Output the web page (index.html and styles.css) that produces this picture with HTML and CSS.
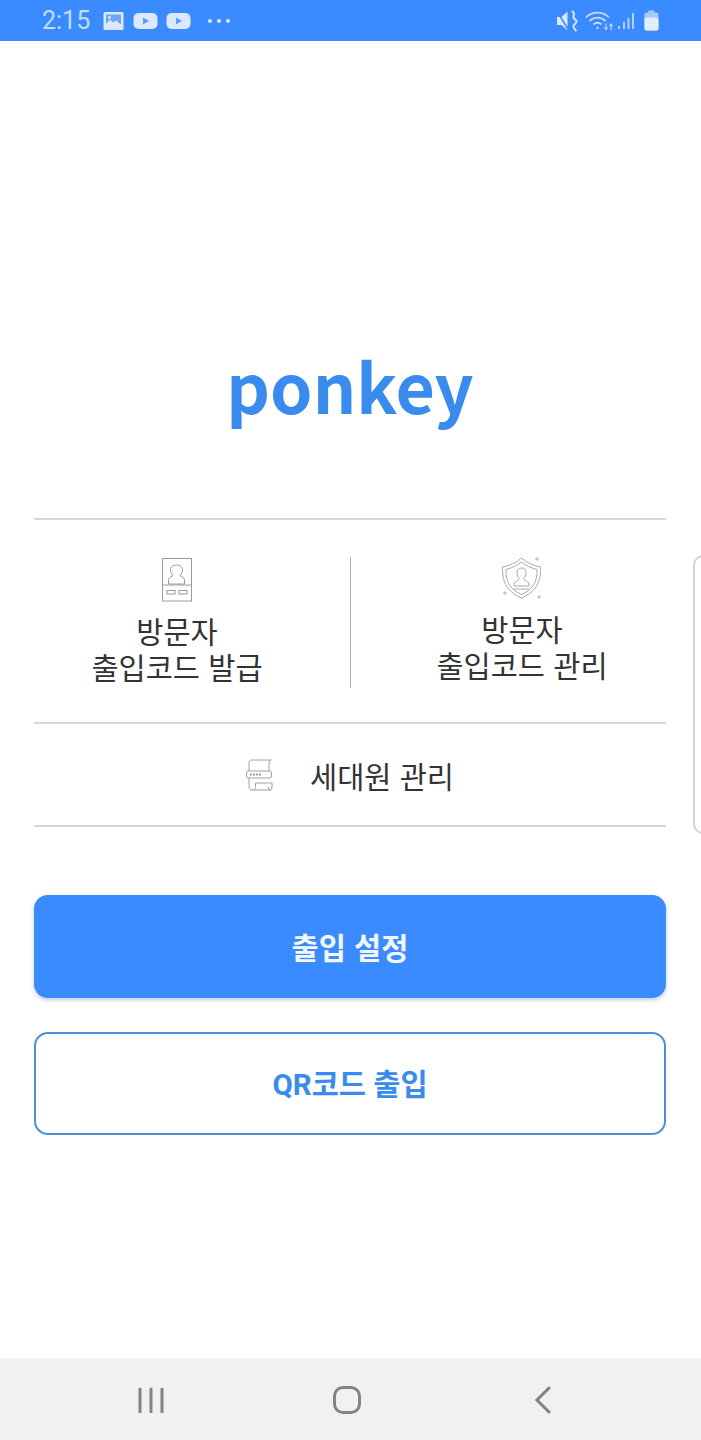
FILE: index.html
```html
<!DOCTYPE html>
<html lang="ko">
  <head>
    <meta charset="UTF-8" />
    <title>ponkey</title>
    <link rel="stylesheet" href="styles.css">
  </head>
  <body>
    <div class="status-bar">
      <div class="status-left">
        <span class="clock">2:15</span>
        <svg class="ic-photo" width="21" height="20" viewBox="0 0 21 20">
          <rect x="0.5" y="1" width="20" height="18" rx="1.5" fill="#dbe8fd"/>
          <rect x="3" y="3.5" width="15" height="11" fill="#6fa5f5"/>
          <path d="M3 13l4-4.5 3 3 3-2 5 4v1.5H3z" fill="#dbe8fd"/>
          <circle cx="6.5" cy="6.5" r="1.4" fill="#dbe8fd"/>
        </svg>
        <svg class="ic-play" width="25" height="18" viewBox="0 0 25 18">
          <rect x="0.5" y="1" width="24" height="16" rx="5" fill="#dbe8fd"/>
          <path d="M10 5.5l6 3.5-6 3.5z" fill="#5f9bf2"/>
        </svg>
        <svg class="ic-play" width="25" height="18" viewBox="0 0 25 18">
          <rect x="0.5" y="1" width="24" height="16" rx="5" fill="#dbe8fd"/>
          <path d="M10 5.5l6 3.5-6 3.5z" fill="#5f9bf2"/>
        </svg>
        <span class="dots"><i></i><i></i><i></i></span>
      </div>
      <div class="status-right">
        <svg class="ic-mute" width="23" height="24" viewBox="0 0 23 24" fill="none">
          <path d="M0 8h4.500l6-5.500v19l-6-5.500H0z" fill="#dbe8fd"/>
          <path d="M0 2l12 20" stroke="#3a8bff" stroke-width="1.5"/>
          <path d="M15 2c4 2.500 1 4.500 1.500 6.500s4 2 3 4.500-4 2.500-3 5 2 3 3 4" stroke="#dbe8fd" stroke-width="2"/>
        </svg>
        <svg class="ic-wifi" width="31" height="24" viewBox="0 0 31 24" fill="none" stroke="#c5dafb" stroke-width="1.800">
          <path d="M1 8.500c6-6.500 17-6.500 23 0"/>
          <path d="M4.500 12c4.500-4.500 11.500-4.500 16 0"/>
          <path d="M8.500 15.500c2.500-2.200 5.500-2.200 8 0"/>
          <circle cx="12.500" cy="19" r="1.200" fill="#c5dafb" stroke="none"/>
          <path d="M21 14.500v6M19.500 18.500l1.500 2 1.500-2M26 21v-6M24.500 17l1.500-2 1.500 2" stroke-width="1.100"/>
        </svg>
        <svg class="ic-signal" width="19" height="20" viewBox="0 0 19 20" fill="#b5d0fa">
          <rect x="1" y="15" width="2" height="3"/>
          <rect x="6" y="11" width="2" height="7"/>
          <rect x="10.500" y="7" width="2" height="11"/>
          <rect x="15" y="2" width="2" height="16"/>
        </svg>
        <svg class="ic-battery" width="15" height="21" viewBox="0 0 15 21">
          <rect x="4.500" y="0.500" width="6" height="3" fill="#a9c9fa"/>
          <rect x="0.500" y="2.500" width="14" height="18" rx="2" fill="#a9c9fa"/>
          <rect x="0.500" y="7.500" width="14" height="13" rx="2" fill="#e3edfd"/>
        </svg>
      </div>
    </div>

    <div class="main">
      <div class="logo">ponkey</div>

      <div class="menu-top">
        <div class="menu-cell issue">
          <svg width="32" height="46" viewBox="0 0 32 46" fill="none" stroke="#9a9a9a" stroke-width="1">
            <rect x="1.500" y="1.500" width="29" height="42.500"/>
            <path d="M1.500 28h29"/>
            <path d="M7.500 27v-4.500c0-2 3.500-3 4.500-4-2-2-2.500-3.500-2.500-6 0-2.500 2.500-4.500 6-4.500s6 2 6 4.500c0 2.500-.5 4-2.500 6 1 1 4.500 2 4.500 4V27z"/>
            <rect x="6" y="33.500" width="8" height="3.500"/>
            <rect x="18" y="33.500" width="8" height="3.500"/>
          </svg>
          <div class="menu-label">방문자<br>출입코드 발급</div>
        </div>
        <div class="menu-cell manage">
          <svg width="44" height="46" viewBox="0 0 44 46" fill="none" stroke="#a8a8a8" stroke-width="1">
            <path d="M21.500 1c5 4.500 11 7.500 19 9 .5 13-3 24-19 31-16-7-19.500-18-19-31 8-1.500 14-4.500 19-9z"/>
            <path d="M21.500 5c4.500 3.500 9.500 6 15.500 7.500.5 10.500-3 19.500-15.500 25C9 32 5.500 23 6 12.500c6-1.500 11-4 15.500-7.500z"/>
            <path d="M14 29v-2c0-2.500 4.500-3 5.500-5-1.500-1.500-2.500-4-2.500-6.500 0-3 2-4.500 4.500-4.500s4.500 1.500 4.500 4.500c0 2.500-1 5-2.500 6.500 1 2 5.500 2.500 5.500 5v2zM14 32h15"/>
            <path d="M37 0v4M35 2h4M5 34v4M3 36h4M39 38v4M37 40h4" stroke-width="0.800"/>
          </svg>
          <div class="menu-label">방문자<br>출입코드 관리</div>
        </div>
      </div>

      <div class="menu-row">
        <svg width="30" height="34" viewBox="0 0 30 34" fill="none" stroke="#a0a0a0" stroke-width="1">
          <path d="M5 13V4.500C5 3 6 2 7.500 2H27c-1.500 0-2 1.500-2 3v8"/>
          <rect x="2.500" y="13" width="25" height="7" rx="2"/>
          <path d="M6 16.500h12" stroke-width="2" stroke-dasharray="2 1"/>
          <path d="M5 20v9c0 2 1.500 3 3 3h19c-2 0-2.500-1.500-2.500-3"/>
          <path d="M10 32c1.500-1 1.500-2 1.500-3.500V25H28v4c0 1.500-1 3-3 3"/>
        </svg>
        <span>세대원 관리</span>
      </div>

      <div class="btn btn-fill">출입 설정</div>
      <div class="btn btn-line">QR코드 출입</div>
    </div>

    <div class="edge-handle"></div>

    <div class="nav-bar">
      <svg width="26" height="26" viewBox="0 0 26 26" fill="none" stroke="#838383" stroke-width="3" stroke-linecap="round">
        <path d="M2 2v23M13 2v23M24 2v23"/>
      </svg>
      <svg width="28" height="28" viewBox="0 0 28 28" fill="none" stroke="#838383" stroke-width="3">
        <rect x="1.500" y="1.500" width="25" height="25" rx="8.500"/>
      </svg>
      <svg width="18" height="28" viewBox="0 0 18 28" fill="none" stroke="#838383" stroke-width="3" stroke-linecap="round">
        <path d="M15 2L3 14l12 12"/>
      </svg>
    </div>
  </body>
</html>
```

FILE: styles.css
```css
* {
  box-sizing: border-box;
}
html,
body {
  margin: 0;
  padding: 0;
}
body {
  position: relative;
  width: 701px;
  height: 1440px;
  overflow: hidden;
  background: #fff;
  font-family: "Noto Sans CJK KR", "Noto Sans", sans-serif;
  display: flex;
  flex-direction: column;
}
svg {
  display: block;
  flex: none;
}

/* status bar */
.status-bar {
  height: 41px;
  background: #3a8bff;
  display: flex;
  justify-content: space-between;
  align-items: center;
  padding: 0 42px 0 42px;
}
.status-left {
  display: flex;
  align-items: center;
}
.clock {
  font-family: Roboto, sans-serif;
  font-size: 25px;
  color: #c4dbfc;
  width: 61px;
}
.ic-photo {
  margin-right: 9px;
}
.ic-play {
  margin-right: 8px;
}
.dots {
  display: flex;
  gap: 5px;
  margin-left: 9px;
}
.dots i {
  width: 4px;
  height: 4px;
  border-radius: 50%;
  background: #dbe8fd;
}
.status-right {
  display: flex;
  align-items: center;
}
.ic-wifi {
  margin-left: 5px;
}
.ic-signal {
  margin-left: 1px;
}
.ic-battery {
  margin-left: 8px;
}

/* main */
.main {
  flex: 1;
  padding: 0 35px 0 34px;
}
.logo {
  height: 477px;
  padding-top: 294px;
  text-align: center;
  font-size: 68px;
  line-height: 100px;
  font-weight: 700;
  color: #3a8bee;
}
.menu-top {
  height: 206px;
  border-top: 2px solid #d6d6d6;
  border-bottom: 2px solid #d6d6d6;
  padding-top: 37px;
  display: flex;
}
.menu-cell {
  height: 131px;
  display: flex;
  flex-direction: column;
  align-items: center;
  color: #333;
}
.menu-cell.issue {
  border-right: 1px solid #b5b5b5;
  width: 317px;
  padding-right: 30px;
}
.menu-cell.manage {
  width: 315px;
  padding-left: 27px;
}
.menu-label {
  font-size: 29.5px;
  line-height: 36px;
  text-align: center;
}
.issue .menu-label {
  margin-top: 9px;
}
.manage .menu-label {
  margin-top: 7px;
}
.menu-row {
  height: 103px;
  border-bottom: 2px solid #d6d6d6;
  display: flex;
  align-items: center;
  padding-left: 210px;
  font-size: 29.5px;
  color: #333;
}
.menu-row span {
  margin-left: 36px;
}
.btn {
  height: 103px;
  border-radius: 14px;
  display: flex;
  align-items: center;
  justify-content: center;
  font-weight: 700;
  padding-bottom: 2px;
}
.btn-fill {
  margin-top: 68px;
  background: #3a8bff;
  color: #f2f7ff;
  font-size: 29.5px;
  box-shadow: 0 2px 4px rgba(40, 90, 170, 0.3);
}
.btn-line {
  margin-top: 34px;
  background: #fff;
  border: 2px solid #4c8fd6;
  color: #3a8bee;
  font-family: Roboto, "Noto Sans CJK KR", sans-serif;
  font-size: 29.5px;
  padding-bottom: 4px;
}

/* edge panel handle, sits over the page */
.edge-handle {
  position: absolute;
  left: 693px;
  top: 555px;
  width: 20px;
  height: 279px;
  border: 2px solid #d4d4d4;
  border-radius: 10px;
}

/* bottom nav */
.nav-bar {
  height: 82px;
  background: #f1f1f1;
  display: flex;
  align-items: center;
  padding: 2px 149px 0 138px;
  justify-content: space-between;
}
.nav-bar svg:nth-child(2) {
  margin-left: -4px;
}
```
